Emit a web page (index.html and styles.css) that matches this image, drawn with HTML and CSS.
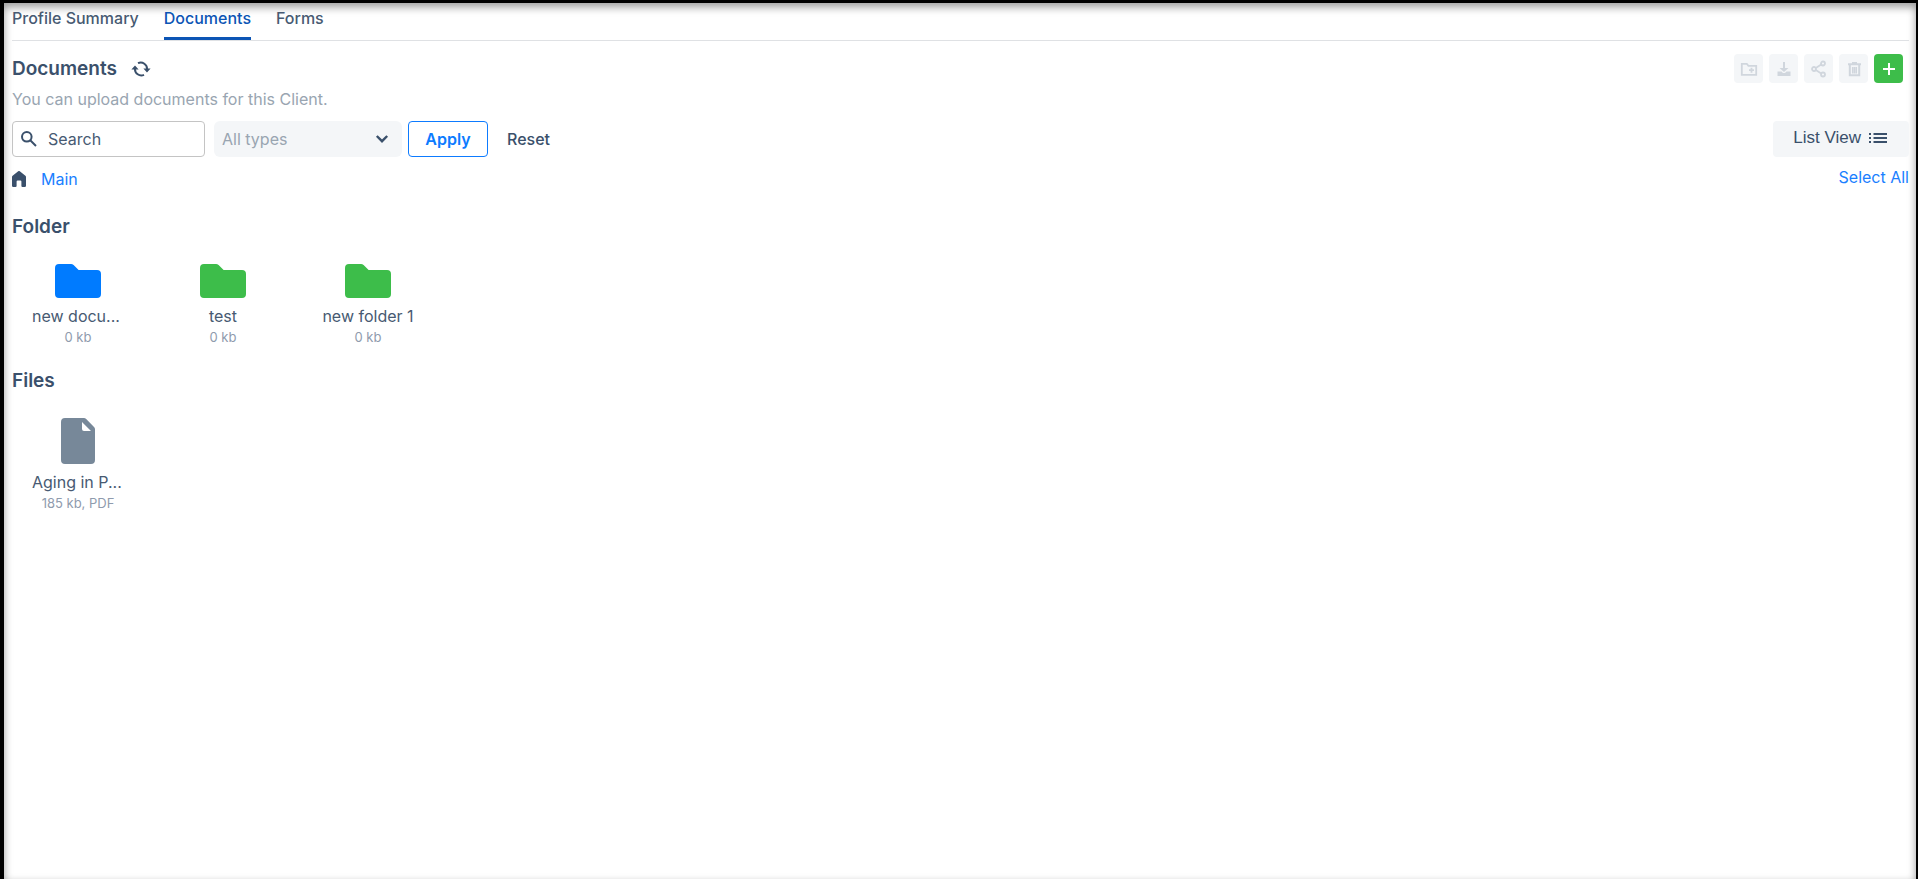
FILE: index.html
```html
<!DOCTYPE html>
<html lang="en">
<head>
    <meta charset="UTF-8">
    <meta name="viewport" content="width=device-width, initial-scale=1.0">
    <title>Client Documents</title>
    <link rel="stylesheet" href="styles.css">
</head>
<body>

    <main class="page">
        <nav class="tabs">
            <a href="#" class="tab">Profile Summary</a>
            <a href="#" class="tab active">Documents</a>
            <a href="#" class="tab">Forms</a>
        </nav>

        <header class="page-header">
            <div class="title-row">
                <h1>Documents</h1>
                <button type="button" class="refresh-btn" aria-label="Refresh">
                    <svg width="20" height="16" viewBox="0 0 20 16" fill="none" stroke="currentColor" stroke-width="2">
                        <path d="M7 2.2A6.3 6.3 0 0 1 16 8.5M13 13.8A6.3 6.3 0 0 1 4 7.5"/>
                        <path d="M12.4 7.6h7.2L16 11.4zM.4 8.4h7.2L4 4.6z" fill="currentColor" stroke="none"/>
                    </svg>
                </button>
            </div>
            <div class="actions">
                <button type="button" class="icon-btn" aria-label="New folder">
                    <svg width="18" height="18" viewBox="0 0 18 18" fill="none" stroke="currentColor" stroke-width="1.8">
                        <path d="M1.8 3.8h5l1.6 2h7.8v9H1.8z"/>
                        <path d="M11.5 7.7v5M9 10.2h5"/>
                    </svg>
                </button>
                <button type="button" class="icon-btn" aria-label="Download">
                    <svg width="18" height="18" viewBox="0 0 18 18" fill="currentColor">
                        <path d="M8 2h2v6h3.5L9 12 4.5 8H8z"/>
                        <path d="M2.5 11.5h4L8 13h2l1.5-1.5h4V16h-13z"/>
                    </svg>
                </button>
                <button type="button" class="icon-btn" aria-label="Share">
                    <svg width="18" height="18" viewBox="0 0 18 18" fill="none" stroke="currentColor" stroke-width="1.8">
                        <circle cx="13" cy="3.5" r="2"/>
                        <circle cx="4" cy="9" r="2"/>
                        <circle cx="13" cy="14.5" r="2"/>
                        <path d="M11.2 4.6 5.800 8M5.800 10l5.400 3.400"/>
                    </svg>
                </button>
                <button type="button" class="icon-btn" aria-label="Delete">
                    <svg width="18" height="18" viewBox="0 0 18 18" fill="none" stroke="currentColor">
                        <path d="M3 4.300h13M7 3h5" stroke-width="2"/>
                        <path d="M4.800 5v10.200h9.400V5" stroke-width="2"/>
                        <path d="M7.700 7v6.500M9.500 7v6.500M11.300 7v6.500" stroke-width="1.500"/>
                    </svg>
                </button>
                <button type="button" class="icon-btn add-btn" aria-label="Add">
                    <svg width="18" height="18" viewBox="0 0 18 18" fill="none" stroke="currentColor" stroke-width="2">
                        <path d="M9 3v12M3 9h12"/>
                    </svg>
                </button>
            </div>
        </header>

        <p class="subtitle">You can upload documents for this Client.</p>

        <div class="toolbar">
            <form class="filters">
                <div class="search-box">
                    <svg width="18" height="18" viewBox="0 0 18 18" fill="none" stroke="currentColor" stroke-width="2">
                        <circle cx="6.800" cy="6.800" r="4.800"/>
                        <path d="m10.500 10.500 5.500 5.500"/>
                    </svg>
                    <input type="text" placeholder="Search" aria-label="Search">
                </div>
                <div class="select-box">
                    <select aria-label="Document type">
                        <option>All types</option>
                    </select>
                    <svg width="14" height="10" viewBox="0 0 14 10" fill="none" stroke="currentColor" stroke-width="2.400">
                        <path d="m1.800 2 5.200 5.200L12.200 2"/>
                    </svg>
                </div>
                <button type="submit" class="btn apply-btn">Apply</button>
                <button type="reset" class="btn reset-btn">Reset</button>
            </form>
            <button type="button" class="btn view-btn">
                List View
                <svg width="18" height="12" viewBox="0 0 18 12" fill="currentColor">
                    <path d="M4.500 1H18v2H4.500zM4.500 5H18v2H4.500zM4.500 9H18v2H4.500zM0 1h2v2H0zM0 5h2v2H0zM0 9h2v2H0z"/>
                </svg>
            </button>
        </div>

        <div class="path-row">
            <div class="breadcrumb">
                <svg width="14" height="16" viewBox="0 0 14 16" fill="currentColor">
                    <path d="M6.200.3a1.300 1.300 0 0 1 1.600 0l5.600 4.500q.6.500.6 1.200v8.700q0 1.300-1.300 1.300h-2.200q-1.100 0-1.100-1.100V10.500q0-1-1-1H5.600q-1 0-1 1v4.400Q4.600 16 3.500 16H1.300Q0 16 0 14.700V6q0-.7.600-1.200z"/>
                </svg>
                <a href="#">Main</a>
            </div>
            <a href="#" class="select-all">Select All</a>
        </div>

        <section class="group">
            <h2>Folder</h2>
            <div class="items">
                <div class="item blue">
                    <svg width="46" height="34" viewBox="0 0 46 34" fill="currentColor">
                        <path d="M4 0h12q1.500 0 2.600 1l5 5H42q4 0 4 4v20q0 4-4 4H4q-4 0-4-4V4q0-4 4-4z"/>
                    </svg>
                    <div class="name clipped">new docu...</div>
                    <div class="size">0 kb</div>
                </div>
                <div class="item green">
                    <svg width="46" height="34" viewBox="0 0 46 34" fill="currentColor">
                        <path d="M4 0h12q1.500 0 2.600 1l5 5H42q4 0 4 4v20q0 4-4 4H4q-4 0-4-4V4q0-4 4-4z"/>
                    </svg>
                    <div class="name">test</div>
                    <div class="size">0 kb</div>
                </div>
                <div class="item green">
                    <svg width="46" height="34" viewBox="0 0 46 34" fill="currentColor">
                        <path d="M4 0h12q1.500 0 2.600 1l5 5H42q4 0 4 4v20q0 4-4 4H4q-4 0-4-4V4q0-4 4-4z"/>
                    </svg>
                    <div class="name">new folder 1</div>
                    <div class="size">0 kb</div>
                </div>
            </div>
        </section>

        <section class="group">
            <h2>Files</h2>
            <div class="items">
                <div class="item gray">
                    <svg width="34" height="46" viewBox="0 0 34 46" fill="currentColor">
                        <path fill-rule="evenodd" d="M4 0h19q1.200 0 2.200 1l7.800 8q1 1 1 2.200V42q0 4-4 4H4q-4 0-4-4V4q0-4 4-4zM21 4v7q0 2 2 2h7z"/>
                    </svg>
                    <div class="name clipped">Aging in P...</div>
                    <div class="size">185 kb, PDF</div>
                </div>
            </div>
        </section>
    </main>

</body>
</html>
```
FILE: styles.css
```css
/* Global Styles */
* {
    box-sizing: border-box;
}

body {
    font-family: Inter, sans-serif;
    font-size: 16px;
    line-height: 20px;
    color: #3a506b;
    margin: 0;
}

a {
    color: #1a80ff;
    text-decoration: none;
}

h1, h2 {
    font-size: 19px;
    line-height: 24px;
    font-weight: 600;
    margin: 0;
}

button, input, select {
    font: inherit;
    color: inherit;
    margin: 0;
}

button {
    cursor: pointer;
}

svg {
    display: block;
    flex-shrink: 0;
}

.page {
    min-height: 100vh;
    padding: 0 7px 0 8px;
    border: solid #000;
    border-width: 3px 2px 0 4px;
    box-shadow: inset 0 4px 8px rgba(0, 0, 0, 0.4);
}

/* Tabs */
.tabs {
    display: flex;
    gap: 25px;
    border-bottom: 1px solid #dfe1e4;
}

.tab {
    padding: 5px 0 9px;
    border-bottom: 3px solid transparent;
    color: #475a72;
    font-weight: 500;
}

.tab.active {
    color: #0c55b5;
    border-color: #0c55b5;
}

/* Header */
.page-header {
    display: flex;
    justify-content: space-between;
    align-items: center;
    padding: 13px 6px 0 0;
}

.title-row, .actions {
    display: flex;
    align-items: center;
}

.title-row {
    gap: 14px;
}

.refresh-btn {
    padding: 0;
    border: none;
    background: none;
}

.actions {
    gap: 6px;
}

.icon-btn {
    display: flex;
    justify-content: center;
    align-items: center;
    width: 29px;
    height: 29px;
    padding: 0;
    border: none;
    border-radius: 4px;
    background: #f4f6f8;
    color: #d0d6dd;
}

.add-btn {
    background: #3dbd4a;
    color: #fff;
}

.subtitle {
    margin: 6px 0 12px;
    color: #99a5b1;
}

/* Toolbar */
.toolbar, .path-row {
    display: flex;
    justify-content: space-between;
}

.filters {
    display: flex;
    align-items: center;
}

.search-box {
    display: flex;
    align-items: center;
    gap: 10px;
    width: 193px;
    height: 36px;
    padding: 0 7px;
    border: 1px solid #c4c4c4;
    border-radius: 4px;
}

.search-box input {
    width: 100%;
    min-width: 0;
    padding: 0;
    border: none;
    outline: none;
    background: none;
}

.search-box input::placeholder {
    color: #475a72;
    opacity: 1;
}

.select-box {
    display: grid;
    align-items: center;
    width: 188px;
    margin: 0 6px 0 9px;
}

.select-box select, .select-box svg {
    grid-area: 1 / 1;
}

.select-box select {
    width: 100%;
    height: 36px;
    padding: 0 8px;
    border: none;
    border-radius: 6px;
    background: #f4f6f8;
    color: #99a5b1;
    appearance: none;
}

.select-box svg {
    justify-self: end;
    margin-right: 13px;
    pointer-events: none;
}

.btn {
    height: 36px;
    border: none;
    border-radius: 4px;
    background: none;
}

.apply-btn {
    width: 80px;
    padding: 0;
    border: 1px solid #0d7bff;
    color: #0d7bff;
    font-weight: 600;
}

.reset-btn {
    padding: 0 19px;
    font-weight: 500;
}

.view-btn {
    display: flex;
    align-items: center;
    gap: 8px;
    padding: 0 22px 2px 20px;
    background: #f4f6f8;
    font-family: "Liberation Sans", Arial, sans-serif;
    font-size: 17px;
}

.path-row {
    padding: 10px 0 4px;
}

.breadcrumb {
    display: flex;
    align-items: center;
    gap: 15px;
    padding-top: 2px;
}

/* Folders and files */
.group {
    padding-top: 22px;
}

.items {
    display: flex;
    flex-wrap: wrap;
    gap: 13px;
    padding-top: 25px;
}

.item {
    display: flex;
    flex-direction: column;
    align-items: center;
    width: 132px;
}

.name {
    width: 92px;
    margin-top: 8px;
    color: #475a72;
    text-align: center;
    white-space: nowrap;
}

.name.clipped {
    text-align: left;
}

.size {
    margin-top: 1px;
    color: #8f9bad;
    font-size: 13px;
}

.blue svg {
    color: #007bff;
}

.green svg {
    color: #3dbd4a;
}

.gray svg {
    color: #778899;
}
```
